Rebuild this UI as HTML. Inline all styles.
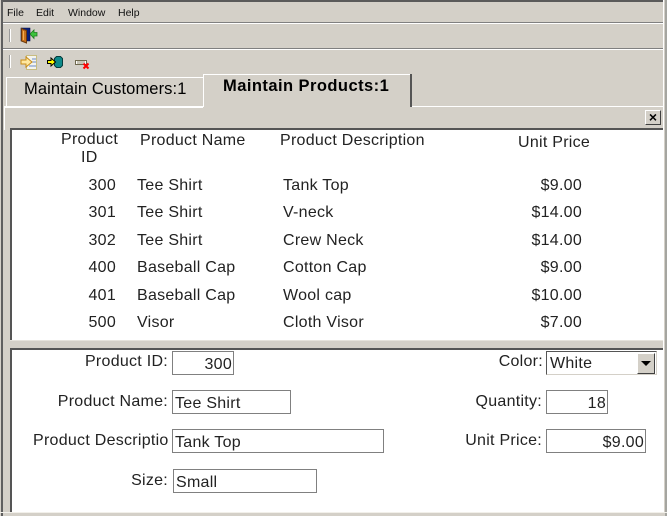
<!DOCTYPE html>
<html><head><meta charset="utf-8"><style>
html,body{margin:0;padding:0;width:667px;height:516px;overflow:hidden;background:#d4d0c8}
#r{position:relative;width:667px;height:516px;overflow:hidden;font-family:"Liberation Sans",sans-serif;color:#000}
.b{position:absolute}
.t{position:absolute;font-size:16px;letter-spacing:.27px;line-height:18px;height:18px;margin-top:1px;white-space:nowrap;color:#222}
.m{position:absolute;font-size:10.5px;line-height:13px;top:7px;white-space:nowrap;color:#111}
.ra{text-align:right;width:160px}
.i{position:absolute;box-sizing:border-box;border:1px solid #808080;background:#fff;font-size:16px;letter-spacing:.27px;line-height:24px;padding:1px 2px 0;white-space:nowrap;overflow:hidden;color:#222}
.i.r{text-align:right;padding-right:1px}
</style></head><body><div id="r">
<div class="b" style="left:3px;top:0;width:660px;height:2px;background:#5a5a5a"></div>
<div class="b" style="left:1px;top:0;width:2px;height:516px;background:#5f5f5f"></div>
<div class="b" style="left:663px;top:0;width:1px;height:513px;background:#fff"></div>
<div class="b" style="left:665px;top:0;width:2px;height:516px;background:#a5a5a0"></div>
<div class="b" style="left:3px;top:22px;width:660px;height:1px;background:#808080"></div>
<div class="b" style="left:3px;top:23px;width:660px;height:1px;background:#fff"></div>
<div class="b" style="left:3px;top:48px;width:660px;height:1px;background:#808080"></div>
<div class="b" style="left:3px;top:49px;width:660px;height:1px;background:#fff"></div>
<div class="b" style="left:9px;top:29px;width:1px;height:13px;background:#9a9a9a"></div>
<div class="b" style="left:10px;top:29px;width:1px;height:13px;background:#fff"></div>
<div class="b" style="left:9px;top:55px;width:1px;height:13px;background:#9a9a9a"></div>
<div class="b" style="left:10px;top:55px;width:1px;height:13px;background:#fff"></div>
<div class="m" style="left:7px">File</div>
<div class="m" style="left:36px">Edit</div>
<div class="m" style="left:68px">Window</div>
<div class="m" style="left:118px">Help</div>

<svg class="b" style="left:18px;top:26px" width="22" height="20" viewBox="0 0 22 20">
<path d="M3 2h9v13H3z" fill="#0a1f7a" stroke="#06124a" stroke-width=".6"/>
<path d="M3.5 2.5l5 2v12.500l-5-2z" fill="#c8701c" stroke="#6b3a0c" stroke-width="1"/>
<path d="M5.500 5v9" stroke="#f0b050"/>
<path d="M12 8l4-4v2.500h3v3.500h-3v2.500z" fill="#3cc43c" stroke="#1d7a1d" stroke-width=".8"/></svg>
<svg class="b" style="left:20px;top:54px" width="18" height="16" viewBox="0 0 18 16">
<path d="M6.500 1.500h10v14h-10z" fill="#f4f4ee" stroke="#c8bc80"/><path d="M12 5h4M12 8h4M9 12h7" stroke="#6a8ac8"/>
<path d="M1 6h5V3l6 5-6 5v-3H1z" fill="#ffe8a0" stroke="#c88c18"/></svg>
<svg class="b" style="left:46px;top:54px" width="18" height="16" viewBox="0 0 18 16">
<path d="M10.500 2.500h4l2 2v7l-2 2h-4l-2-2v-7z" fill="#0d8a8a" stroke="#063c3c"/>
<path d="M1.500 6.500h3.500V4l4.500 4-4.500 4v-2.500H1.500z" fill="#ff0" stroke="#000"/></svg>
<svg class="b" style="left:74px;top:58px" width="16" height="12" viewBox="0 0 16 12">
<path d="M1.500 2.500h11v4h-11z" fill="#fff" stroke="#6f694e"/><path d="M4 3v3M6 3v3M8 3v3M10 3v3" stroke="#8f896d"/>
<path d="M9.500 5.500l5 5M14.500 5.500l-5 5" stroke="#f00" stroke-width="2"/></svg>

<!-- tabs -->
<div class="b" style="left:6px;top:77px;width:197px;height:1px;background:#fff"></div>
<div class="b" style="left:6px;top:77px;width:1px;height:29px;background:#fff"></div>
<div class="b" style="left:4px;top:106px;width:199px;height:2px;background:#fff"></div>
<div class="b" style="left:4px;top:106px;width:1px;height:24px;background:#fff"></div>
<div class="t" style="left:24px;top:79px;font-size:16.500px;letter-spacing:.1px;color:#000">Maintain Customers:1</div>
<div class="b" style="left:203px;top:74px;width:207px;height:1px;background:#fff"></div>
<div class="b" style="left:203px;top:74px;width:1px;height:33px;background:#fff"></div>
<div class="b" style="left:410px;top:74px;width:2px;height:33px;background:#555"></div>
<div class="b" style="left:412px;top:106px;width:251px;height:1px;background:#fff"></div>
<div class="t" style="left:223px;top:76px;font-size:16.500px;letter-spacing:.45px;font-weight:bold;color:#000">Maintain Products:1</div>

<!-- close -->
<div class="b" style="left:645px;top:110px;width:16px;height:15px;box-sizing:border-box;background:#d4d0c8;border:1px solid;border-color:#fff #404040 #404040 #fff;font-size:14px;line-height:13px;text-align:center;font-weight:bold;color:#000">×</div>

<!-- panes -->
<div class="b" style="left:10px;top:128px;width:653px;height:213px;background:#fff"></div>
<div class="b" style="left:10px;top:128px;width:653px;height:2px;background:#555"></div>
<div class="b" style="left:10px;top:128px;width:2px;height:213px;background:#555"></div>
<div class="b" style="left:10px;top:340px;width:653px;height:1px;background:#e6e3dc"></div>
<div class="b" style="left:10px;top:348px;width:653px;height:164px;background:#fff"></div>
<div class="b" style="left:10px;top:348px;width:653px;height:2px;background:#555"></div>
<div class="b" style="left:10px;top:348px;width:2px;height:164px;background:#555"></div>
<div class="b" style="left:0;top:512px;width:667px;height:1px;background:#f2f0ea"></div>

<!-- table header -->
<div class="t" style="left:61px;top:130px">Product</div>
<div class="t" style="left:81px;top:148px">ID</div>
<div class="t" style="left:140px;top:131px">Product Name</div>
<div class="t" style="left:280px;top:131px">Product Description</div>
<div class="t" style="left:518px;top:133px">Unit Price</div>

<div class="t ra" style="left:-44px;top:176px">300</div><div class="t" style="left:137px;top:176px">Tee Shirt</div><div class="t" style="left:283px;top:176px">Tank Top</div><div class="t ra" style="left:422px;top:176px">$9.00</div>
<div class="t ra" style="left:-44px;top:203px">301</div><div class="t" style="left:137px;top:203px">Tee Shirt</div><div class="t" style="left:283px;top:203px">V-neck</div><div class="t ra" style="left:422px;top:203px">$14.00</div>
<div class="t ra" style="left:-44px;top:231px">302</div><div class="t" style="left:137px;top:231px">Tee Shirt</div><div class="t" style="left:283px;top:231px">Crew Neck</div><div class="t ra" style="left:422px;top:231px">$14.00</div>
<div class="t ra" style="left:-44px;top:258px">400</div><div class="t" style="left:137px;top:258px">Baseball Cap</div><div class="t" style="left:283px;top:258px">Cotton Cap</div><div class="t ra" style="left:422px;top:258px">$9.00</div>
<div class="t ra" style="left:-44px;top:286px">401</div><div class="t" style="left:137px;top:286px">Baseball Cap</div><div class="t" style="left:283px;top:286px">Wool cap</div><div class="t ra" style="left:422px;top:286px">$10.00</div>
<div class="t ra" style="left:-44px;top:313px">500</div><div class="t" style="left:137px;top:313px">Visor</div><div class="t" style="left:283px;top:313px">Cloth Visor</div><div class="t ra" style="left:422px;top:313px">$7.00</div>

<!-- form -->
<div class="t ra" style="left:8px;top:352px">Product ID:</div>
<div class="t ra" style="left:8px;top:392px">Product Name:</div>
<div class="t" style="left:33px;top:431px;width:135px;overflow:hidden">Product Description</div>
<div class="t ra" style="left:8px;top:471px">Size:</div>
<div class="t ra" style="left:383px;top:352px">Color:</div>
<div class="t ra" style="left:382px;top:392px">Quantity:</div>
<div class="t ra" style="left:382px;top:431px">Unit Price:</div>

<div class="i r" style="left:172px;top:351px;width:62px;height:24px">300</div>
<div class="i" style="left:172px;top:390px;width:119px;height:24px">Tee Shirt</div>
<div class="i" style="left:172px;top:429px;width:212px;height:24px">Tank Top</div>
<div class="i" style="left:173px;top:469px;width:144px;height:24px">Small</div>
<div class="i r" style="left:546px;top:390px;width:62px;height:24px">18</div>
<div class="i r" style="left:546px;top:429px;width:100px;height:24px">$9.00</div>

<div class="b" style="left:546px;top:351px;width:111px;height:24px;box-sizing:border-box;background:#fff;border:1px solid;border-color:#555 #d4d0c8 #d4d0c8 #555;font-size:16px;letter-spacing:.27px;line-height:24px;padding-left:3px;color:#222">White</div>
<div class="b" style="left:637px;top:353px;width:18px;height:21px;box-sizing:border-box;background:#d4d0c8;border:1px solid;border-color:#fff #404040 #404040 #fff"></div>
<div class="b" style="left:641px;top:361px;width:0;height:0;border-left:5px solid transparent;border-right:5px solid transparent;border-top:5px solid #000"></div>
</div></body></html>
